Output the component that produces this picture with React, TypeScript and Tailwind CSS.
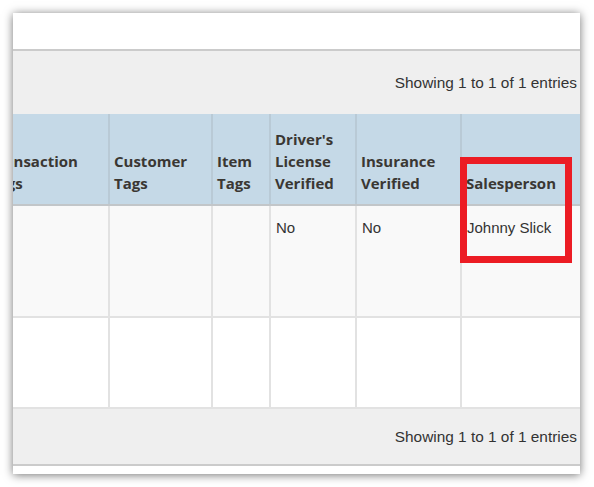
import React from 'react';

const columns = [
  { label: ['Transaction', 'Tags'], width: 125 },
  { label: ['Customer', 'Tags'], width: 103 },
  { label: ['Item', 'Tags'], width: 58 },
  { label: ["Driver's", 'License', 'Verified'], width: 86 },
  { label: ['Insurance', 'Verified'], width: 105 },
  { label: ['Salesperson'], width: 140 },
];

const rows = [
  ['', '', '', 'No', 'No', 'Johnny Slick'],
  ['', '', '', '', '', ''],
];

function Info({ h }: { h: string }) {
  return (
    <div className={`${h} shrink-0 flex items-center justify-end bg-[#efefef] pr-[3px] text-[15.4px] text-[#333] font-['Liberation_Sans',Arial,sans-serif]`}>
      Showing 1 to 1 of 1 entries
    </div>
  );
}

export default function App() {
  return (
    <div className="w-[594px] h-[487px] bg-white pt-[13px] pl-[13px] overflow-hidden">
      <div className="relative w-[567px] h-[461px] bg-white overflow-hidden shadow-[0_1px_9px_rgba(0,0,0,0.55)] flex flex-col">
        {/* top strip */}
        <div className="h-[38px] shrink-0 border-b-2 border-[#cbcbcb] bg-white" />
        <Info h="h-[63px]" />

        <div className="ml-[-30px] shrink-0">
          <table className="table-fixed border-collapse" style={{ width: 617 }}>
            <colgroup>
              {columns.map((c, i) => (
                <col key={i} style={{ width: c.width }} />
              ))}
            </colgroup>
            <thead>
              <tr className="h-[91px] bg-[#c5d9e7]">
                {columns.map((c, i) => (
                  <th
                    key={i}
                    className="align-bottom text-left pl-[4px] pb-[10px] border-x-2 border-b-2 border-[#b9cad6] border-b-[#c2c6c9] text-[15px] leading-[22px] font-bold text-[#3a3733] font-['Open_Sans',sans-serif] whitespace-nowrap"
                  >
                    {c.label.map((l, j) => (
                      <div key={j}>{l}</div>
                    ))}
                  </th>
                ))}
              </tr>
            </thead>
            <tbody className="font-['Liberation_Sans',Arial,sans-serif] text-[15px] text-[#333]">
              {rows.map((r, ri) => (
                <tr key={ri} className={ri === 0 ? 'h-[112px] bg-[#f9f9f9]' : 'h-[91px] bg-white'}>
                  {r.map((v, ci) => (
                    <td
                      key={ci}
                      className="align-top pl-[5px] pt-[11px] leading-[22px] border-2 border-[#e2e2e2] border-t-0"
                    >
                      {v}
                    </td>
                  ))}
                </tr>
              ))}
            </tbody>
          </table>
        </div>

        <Info h="h-[55px]" />
        <div className="h-[2px] shrink-0 bg-[#cbcbcb]" />
        <div className="flex-1 bg-white" />

        {/* highlight annotation */}
        <div className="absolute left-[447px] top-[144px] w-[112px] h-[106px] border-[7px] border-[#ec1c24]" />
      </div>
    </div>
  );
}
